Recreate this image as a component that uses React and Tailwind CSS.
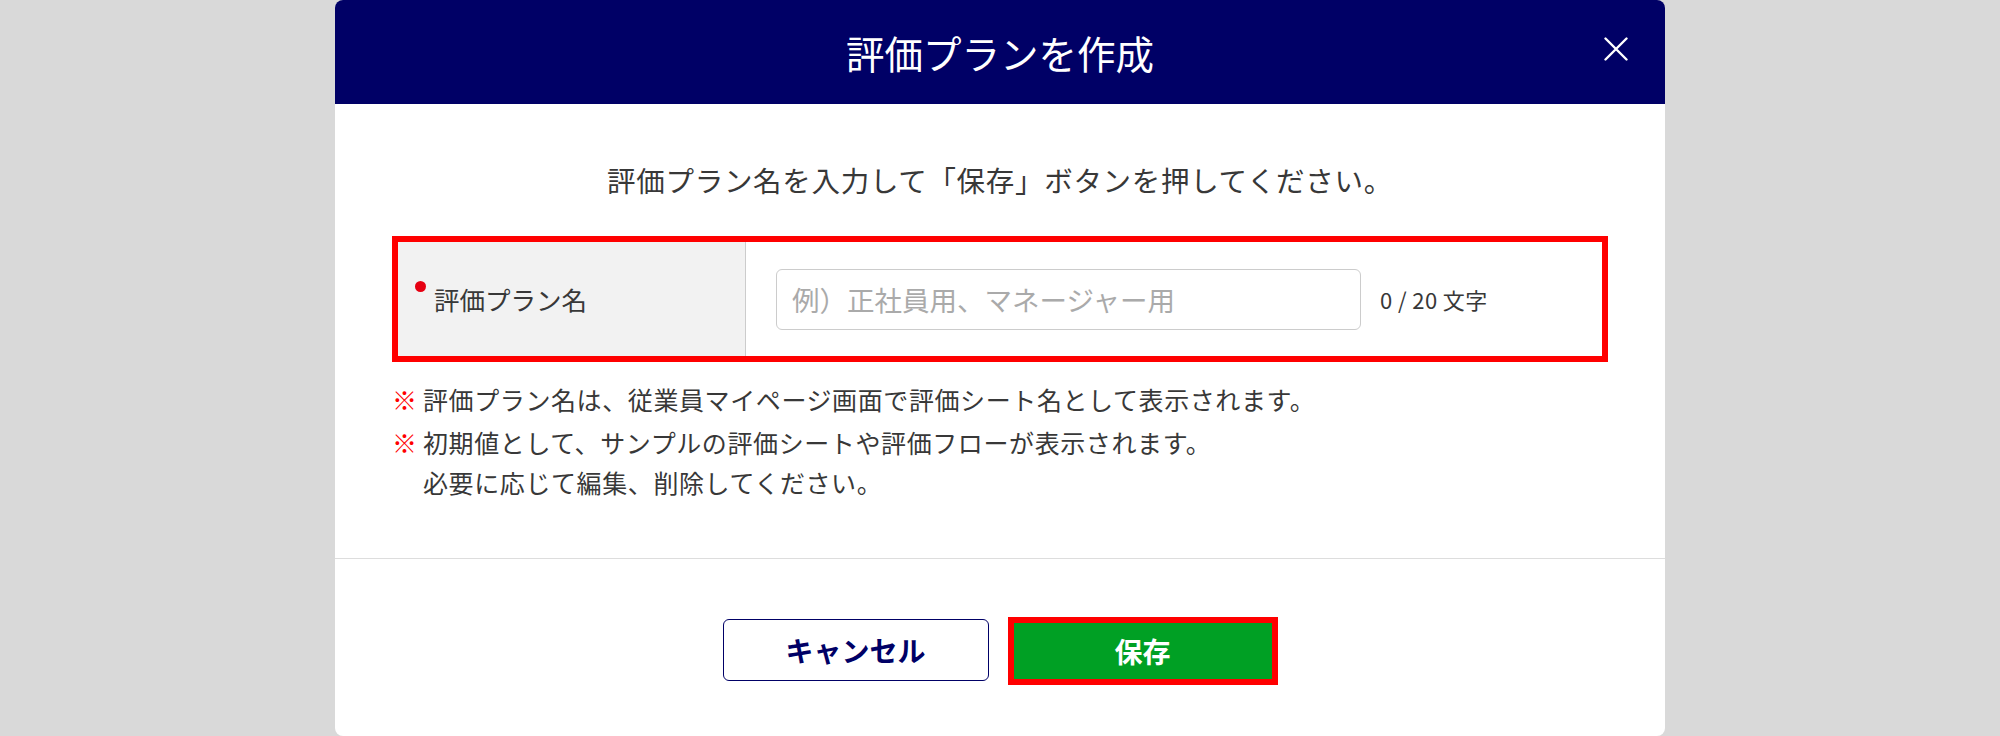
import React, { useState } from "react";

const font = { fontFamily: '"Noto Sans CJK JP", "Noto Sans", sans-serif' };

// Close icon for the modal header
const CloseIcon = () => (
  <svg width="24" height="24" viewBox="0 0 24 24" fill="none">
    <path
      d="M1.5 1.5 L22.5 22.5 M22.5 1.5 L1.5 22.5"
      stroke="white"
      strokeWidth="2.4"
      strokeLinecap="round"
    />
  </svg>
);

const Note = ({ children }) => (
  <div className="flex leading-[40px]">
    <span className="w-[31px] shrink-0 text-[#ff0000]">※</span>
    <div>{children}</div>
  </div>
);

export default function App() {
  const [name, setName] = useState("");

  return (
    <div
      className="w-full h-[736px] bg-[#d9d9d9] flex justify-center overflow-hidden"
      style={font}
    >
      <div className="w-[1330px] h-[736px] bg-white rounded-[8px] overflow-hidden flex flex-col">
        {/* Header */}
        <div className="relative h-[104px] shrink-0 bg-[#000066] flex items-center justify-center">
          <h2 className="text-white text-[38.5px] font-normal leading-none m-0">
            評価プランを作成
          </h2>
          <button className="absolute right-[37px] top-[37px] bg-transparent border-none p-0 cursor-pointer flex">
            <CloseIcon />
          </button>
        </div>

        {/* Body */}
        <div className="h-[454px] shrink-0 px-[57px] pt-[56px] text-[#383838]">
          <p className="text-center text-[28.5px] tracking-[0.7px] leading-[40px] m-0">
            評価プラン名を入力して「保存」ボタンを押してください。
          </p>

          <div className="mt-[36px] h-[126px] border-[6px] border-[#ff0000] flex">
            <div className="w-[348px] shrink-0 bg-[#f2f2f2] border-r border-[#cccccc] flex items-center pl-[17px]">
              <span className="w-[11px] h-[11px] rounded-full bg-[#e60012] -mt-[26px] mr-[8px]" />
              <span className="text-[25.5px] leading-none">評価プラン名</span>
            </div>
            <div className="flex-1 flex items-center pl-[30px]">
              <input
                type="text"
                value={name}
                onChange={(e) => setName(e.target.value)}
                placeholder="例）正社員用、マネージャー用"
                className="w-[585px] h-[61px] border border-[#cccccc] rounded-[6px] px-[15px] text-[27.5px] outline-none placeholder:text-[#aaaaaa]"
                style={font}
              />
              <span className="ml-[19px] text-[22px] tracking-[0.4px] text-[#383838]">
                {name.length} / 20 文字
              </span>
            </div>
          </div>

          <div className="mt-[17px] text-[25px] tracking-[0.6px] flex flex-col gap-[3px]">
            <Note>評価プラン名は、従業員マイページ画面で評価シート名として表示されます。</Note>
            <Note>
              初期値として、サンプルの評価シートや評価フローが表示されます。
              <br />
              必要に応じて編集、削除してください。
            </Note>
          </div>
        </div>

        {/* Footer */}
        <div className="flex-1 border-t border-[#dddddd] flex justify-center items-start pt-[58px] gap-[19px]">
          <button className="w-[266px] h-[62px] mt-[2px] bg-white border-[1.5px] border-[#000066] rounded-[6px] text-[#000066] text-[28px] font-bold cursor-pointer">
            キャンセル
          </button>
          <button className="w-[270px] h-[68px] bg-[#00a024] border-[6px] border-[#ff0000] text-white text-[28px] font-bold cursor-pointer">
            保存
          </button>
        </div>
      </div>
    </div>
  );
}
